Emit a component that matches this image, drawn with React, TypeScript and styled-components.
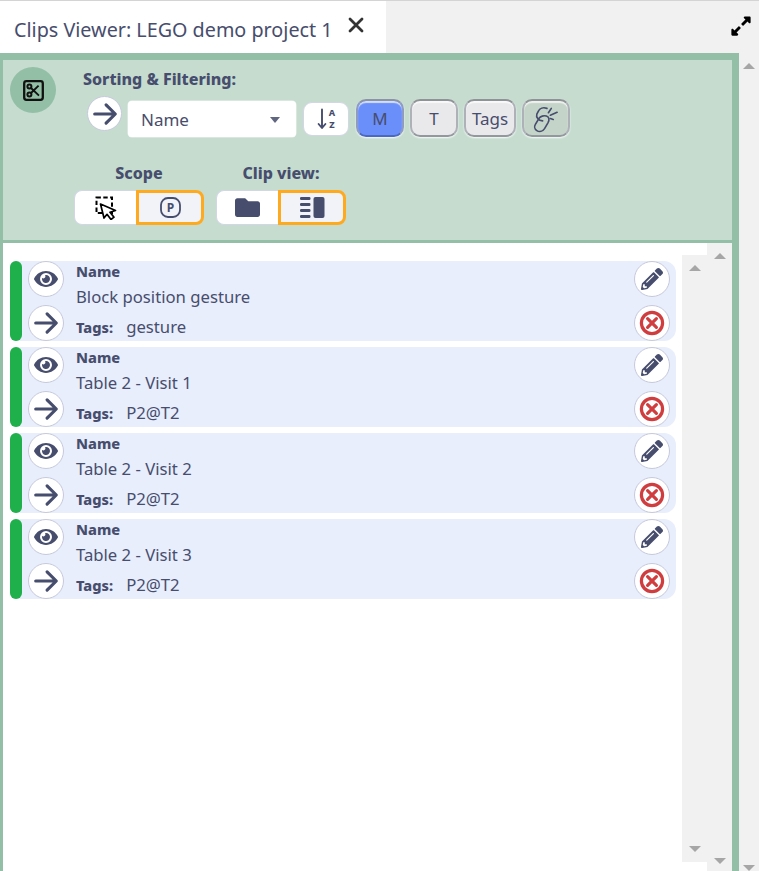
import React from "react";
import styled, { createGlobalStyle } from "styled-components";
import { FaEye, FaPencilAlt, FaFolder, FaExpandAlt } from "react-icons/fa";

const ink = "#474d6d";
const Global = createGlobalStyle`
  html, body { margin: 0; padding: 0; height: 100%; background: #f1f1f1; overflow: hidden; }
  * { box-sizing: border-box; }
  body { font-family: "Noto Sans", "Open Sans", "Liberation Sans", sans-serif; color: ${ink}; }
`;
const Page = styled.div`width: 759px; height: 871px; display: flex; flex-direction: column; border-top: 1px solid #d4d4d4; background: #f1f1f1;`;
const TabBar = styled.div`height: 52px; display: flex; align-items: stretch; justify-content: space-between; padding-right: 7px;`;
const Tab = styled.div`width: 386px; background: #fff; display: flex; align-items: center; padding: 6px 0 0 14px; gap: 15px;`;
const TabTitle = styled.span`font-size: 19.75px; line-height: 24px; white-space: nowrap;`;
const CloseTab = styled.svg`width: 16px; height: 16px; margin-top: -10px; flex: none;`;
const Expand = styled.div`display: flex; align-items: center; color: #000; font-size: 22px; margin-top: -2px; svg { display: block; }`;
const Body = styled.div`flex: 1; display: flex; min-height: 0;`;
const Panel = styled.div`width: 739px; display: flex; flex-direction: column; border: solid #92bfa5; border-width: 7px 7px 0 3px; background: #fff;`;
const Header = styled.div`height: 183px; flex: none; background: #c5dccf; border-bottom: 3px solid #92bfa5; display: flex; padding: 7px 0 0 7px;`;
const ToolBadge = styled.div`width: 46px; height: 46px; border-radius: 50%; background: #92bfa5; display: flex; align-items: center; justify-content: center; flex: none;`;
const Controls = styled.div`display: flex; flex-direction: column; margin-left: 18px;`;
const SortTitle = styled.div`font-weight: 800; font-size: 16px; line-height: 24px; margin: 0 0 0 9px; white-space: nowrap;`;
const SortRow = styled.div`display: flex; align-items: center; margin: 8px 0 0 13px; height: 38px;`;
const RoundBtn = styled.div`
  width: 36px; height: 36px; border-radius: 50%; background: #fff; border: 1px solid #c6c9dc;
  display: flex; align-items: center; justify-content: center; flex: none; color: ${ink};
`;
const ApplyBtn = styled(RoundBtn)`width: 35px; height: 35px; margin-bottom: 9px;`;
const Select = styled.div`width: 168px; height: 36px; margin: 2px 0 0 6px; background: #fff; border-radius: 4px; display: flex; align-items: center; justify-content: space-between; padding: 0 16px 0 13px; font-size: 17px; box-shadow: 0 0 0 0.5px #eef2f0;`;
const Caret = styled.span`width: 0; height: 0; border-left: 5px solid transparent; border-right: 5px solid transparent; border-top: 6px solid #60667f; margin-top: 1px;`;
const SortBtn = styled.div`width: 46px; height: 34px; margin: 2px 7px 0 7px; background: #fff; border: 1px solid #d3d6e4; border-radius: 9px; display: flex; align-items: center; justify-content: center; gap: 2px;`;
const SortLetters = styled.div`display: flex; flex-direction: column; align-items: center; font-size: 9px; line-height: 12.5px; font-weight: 800;`;
const Toggle = styled.div<{ $w: number; $bg: string; $on?: boolean }>`
  width: ${p => p.$w}px; height: 38px; margin-right: 6px; border-radius: 10px; background: ${p => p.$bg};
  border: 2px solid ${p => (p.$on ? "#8f9bc0" : "#aeb1b8")};
  border-top-color: ${p => (p.$on ? "#8d93a0" : "#8f9296")};
  border-bottom-color: ${p => (p.$on ? "#4b69bf" : "#93979e")};
  box-shadow: inset 0 2px 1px rgba(255,255,255,.7), 0 1px 2px rgba(255,255,255,.9);
  display: flex; align-items: center; justify-content: center; font-size: 17px; padding-top: 1px; flex: none;
`;
const Groups = styled.div`display: flex; gap: 12px; margin: 24px 0 0 0;`;
const Group = styled.div`display: flex; flex-direction: column; align-items: center;`;
const GroupTitle = styled.div`font-weight: 800; font-size: 16px; line-height: 24px; margin-bottom: 5px; white-space: nowrap;`;
const Segmented = styled.div`display: flex; height: 35px;`;
const SegOff = styled.div`width: 62px; background: #fff; border: 1px solid #d3d6e4; border-right: 0; border-radius: 8px 0 0 8px; display: flex; align-items: center; justify-content: center; color: ${ink}; font-size: 25px;`;
const SegOn = styled.div`width: 68px; background: #f2f3f8; border: 3px solid #ffa91f; border-radius: 0 8px 8px 0; display: flex; align-items: center; justify-content: center;`;
const ListArea = styled.div`flex: 1; display: flex; min-height: 0; justify-content: flex-end;`;
const ListFrame = styled.div`flex: 1; display: flex; margin: 12px 0 9px; min-width: 0;`;
const List = styled.div`flex: 1; display: flex; flex-direction: column; gap: 6px; padding: 6px 6px 0 7px;`;
const Track = styled.div<{ $top: number; $bottom: number }>`
  width: 25px; flex: none; background: #f1f1f1; display: flex; flex-direction: column; justify-content: space-between; align-items: center;
  padding: ${p => p.$top}px 0 ${p => p.$bottom}px;
`;
const OuterTrack = styled(Track)`width: 20px;`;
const Up = styled.span`width: 0; height: 0; border-left: 6px solid transparent; border-right: 6px solid transparent; border-bottom: 6px solid #a6a6a6;`;
const Down = styled.span`width: 0; height: 0; border-left: 6px solid transparent; border-right: 6px solid transparent; border-top: 6px solid #a6a6a6;`;
const Row = styled.div`height: 80px; display: flex; background: #e8eefc; border-radius: 6px 12px 12px 6px; padding-right: 6px;`;
const Stripe = styled.div`width: 12px; background: #1fb04b; border-radius: 6px; flex: none;`;
const Stack = styled.div`display: flex; flex-direction: column; justify-content: space-between; margin-left: 6px; flex: none;`;
const Info = styled.div`flex: 1; display: flex; flex-direction: column; margin-left: 12px; min-width: 0;`;
const Label = styled.div`font-weight: 800; font-size: 14.6px; line-height: 20px;`;
const Value = styled.div`font-size: 16.7px; line-height: 24px; margin-top: 4px;`;
const TagLine = styled.div`display: flex; align-items: baseline; margin-top: 6px;`;
const TagValue = styled.span`font-size: 16.7px; line-height: 24px; margin-left: 13px;`;

const Arrow = ({ s = 26 }: { s?: number }) => (
  <svg width={s} height={s} viewBox="0 0 24 24" fill="none" stroke={ink} strokeWidth="2.9" strokeLinecap="round" strokeLinejoin="round">
    <path d="M2.5 12H21M13 3.5l8.5 8.5-8.5 8.5" />
  </svg>
);
const XCircle = () => (
  <svg width="26" height="26" viewBox="0 0 26 26" fill="none" stroke="#cf3d3f" strokeWidth="3.2" strokeLinecap="round">
    <circle cx="13" cy="13" r="10.6" />
    <path d="M8.6 8.6l8.8 8.8M17.4 8.6l-8.8 8.8" />
  </svg>
);
const Scissors = () => (
  <svg width="21" height="21" viewBox="0 0 21 21" fill="none" stroke="#111" strokeWidth="2">
    <rect x="1.2" y="1.2" width="18.6" height="18.6" rx="2.2" strokeWidth="2.3" />
    <circle cx="6.4" cy="6.6" r="2" />
    <circle cx="6.4" cy="14.4" r="2" />
    <path d="M8 8l8 7.6M8 13l7.6-7.4" strokeWidth="1.9" />
  </svg>
);
const SelectCursor = () => (
  <svg width="22" height="24" viewBox="0 0 22 24" fill="none">
    <rect x="1.5" y="1.5" width="15.5" height="15.5" stroke="#000" strokeWidth="2" strokeDasharray="4.4 2.4" />
    <path d="M5.5 8L20.5 14.5l-5.5 1.7 4 5-3 2.3-4-5.2-3 3.7z" fill="#fff" stroke="#000" strokeWidth="1.7" strokeLinejoin="round" />
  </svg>
);
const ParkingP = () => (
  <svg width="21" height="21" viewBox="0 0 21 21" fill="none">
    <rect x="1" y="1" width="19" height="19" rx="7" stroke={ink} strokeWidth="1.8" />
    <text x="10.5" y="15" textAnchor="middle" fontSize="12" fontWeight="700" fill={ink} fontFamily="Noto Sans, sans-serif">P</text>
  </svg>
);
const ColumnsIcon = () => (
  <svg width="25" height="21" viewBox="0 0 25 21" fill={ink}>
    <rect x="0" y="0" width="10.5" height="3" rx="1.2" />
    <rect x="0" y="6" width="10.5" height="3" rx="1.2" />
    <rect x="0" y="12" width="10.5" height="3" rx="1.2" />
    <rect x="0" y="18" width="10.5" height="3" rx="1.2" />
    <rect x="13.5" y="0" width="11" height="21" rx="2" />
  </svg>
);
const SortArrow = () => (
  <svg width="10" height="22" viewBox="0 0 10 22">
    <path d="M5 1.5V19.5M1.6 16l3.4 4 3.4-4" fill="none" stroke={ink} strokeWidth="1.9" strokeLinecap="round" strokeLinejoin="round" />
  </svg>
);
const BrokenLink = () => (
  <svg width="26" height="28" viewBox="0 0 26 29" fill="none" stroke={ink} strokeWidth="1.7" strokeLinecap="round" strokeLinejoin="round">
    <path d="M14 3.5C10 2 6.5 3.5 5 6.5L3.5 9.5C2.5 12.5 5 16 9.5 16.5" />
    <path d="M9 11.5C12 10.5 15.5 11.5 16 14C16.3 15.5 15.8 17 15 18.5L11.5 24.5C9.5 27.5 6 28 3.5 26.5C1 25 .8 22 2 20L6 13.5C6.8 12.3 8 11.8 9 11.5Z" />
    <path d="M15.5 8L18.5 3.5M17.5 10.5L24.5 7.5M17.5 14L20.5 15" />
  </svg>
);

const clips = [
  { name: "Block position gesture", tag: "gesture" },
  { name: "Table 2 - Visit 1", tag: "P2@T2" },
  { name: "Table 2 - Visit 2", tag: "P2@T2" },
  { name: "Table 2 - Visit 3", tag: "P2@T2" },
];

export default function App() {
  return (
    <Page>
      <Global />
      <TabBar>
        <Tab>
          <TabTitle>Clips Viewer: LEGO demo project 1</TabTitle>
          <CloseTab viewBox="0 0 16 16" fill="none" stroke="#333" strokeWidth="2.8" strokeLinecap="round">
            <path d="M2 2l12 12M14 2L2 14" />
          </CloseTab>
        </Tab>
        <Expand><FaExpandAlt /></Expand>
      </TabBar>
      <Body>
        <Panel>
          <Header>
            <ToolBadge><Scissors /></ToolBadge>
            <Controls>
              <SortTitle>Sorting &amp; Filtering:</SortTitle>
              <SortRow>
                <ApplyBtn><Arrow /></ApplyBtn>
                <Select>Name<Caret /></Select>
                <SortBtn>
                  <SortArrow />
                  <SortLetters><span>A</span><span>Z</span></SortLetters>
                </SortBtn>
                <Toggle $w={48} $bg="#6a8ffb" $on>M</Toggle>
                <Toggle $w={48} $bg="#e9e9ec">T</Toggle>
                <Toggle $w={52} $bg="#e9e9ec">Tags</Toggle>
                <Toggle $w={48} $bg="#c5d4c9"><BrokenLink /></Toggle>
              </SortRow>
              <Groups>
                <Group>
                  <GroupTitle>Scope</GroupTitle>
                  <Segmented>
                    <SegOff><SelectCursor /></SegOff>
                    <SegOn><ParkingP /></SegOn>
                  </Segmented>
                </Group>
                <Group>
                  <GroupTitle>Clip view:</GroupTitle>
                  <Segmented>
                    <SegOff><FaFolder /></SegOff>
                    <SegOn><ColumnsIcon /></SegOn>
                  </Segmented>
                </Group>
              </Groups>
            </Controls>
          </Header>
          <ListArea>
            <ListFrame>
              <List>
                {clips.map(c => (
                  <Row key={c.name}>
                    <Stripe />
                    <Stack>
                      <RoundBtn><FaEye size={24} /></RoundBtn>
                      <RoundBtn><Arrow /></RoundBtn>
                    </Stack>
                    <Info>
                      <Label>Name</Label>
                      <Value>{c.name}</Value>
                      <TagLine><Label>Tags:</Label><TagValue>{c.tag}</TagValue></TagLine>
                    </Info>
                    <Stack>
                      <RoundBtn><FaPencilAlt size={22} /></RoundBtn>
                      <RoundBtn><XCircle /></RoundBtn>
                    </Stack>
                  </Row>
                ))}
              </List>
              <Track $top={10} $bottom={10}><Up /><Down /></Track>
            </ListFrame>
            <Track $top={10} $bottom={7}><Up /><Down /></Track>
          </ListArea>
        </Panel>
        <OuterTrack $top={10} $bottom={0}><Up /><Down /></OuterTrack>
      </Body>
    </Page>
  );
}
